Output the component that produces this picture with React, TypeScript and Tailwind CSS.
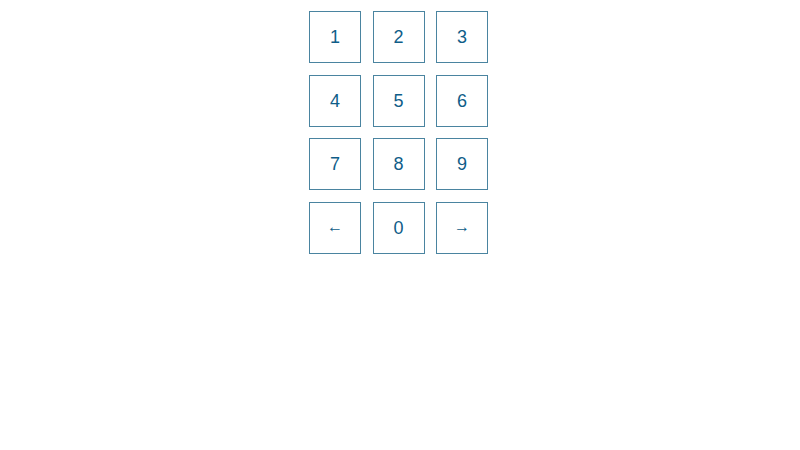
const keys = ["1", "2", "3", "4", "5", "6", "7", "8", "9", "←", "0", "→"];

export default function App() {
  return (
    <div className="flex h-[450px] w-[800px] justify-center bg-white pr-[3px] pt-[11px] font-['Liberation_Sans',Arial,sans-serif]">
      <div className="grid h-fit grid-cols-[52px_52px_52px] gap-[11.5px]">
        {keys.map((k) => {
          const arrow = k === "←" || k === "→";
          return (
            <button
              key={k}
              className="flex h-[52px] w-[52px] items-center justify-center border border-[#4a84a0] bg-white pt-px text-[18px] text-[#0f5d88]"
            >
              {arrow ? <span className="mb-[2px] text-[16px] leading-none">{k}</span> : k}
            </button>
          );
        })}
      </div>
    </div>
  );
}
